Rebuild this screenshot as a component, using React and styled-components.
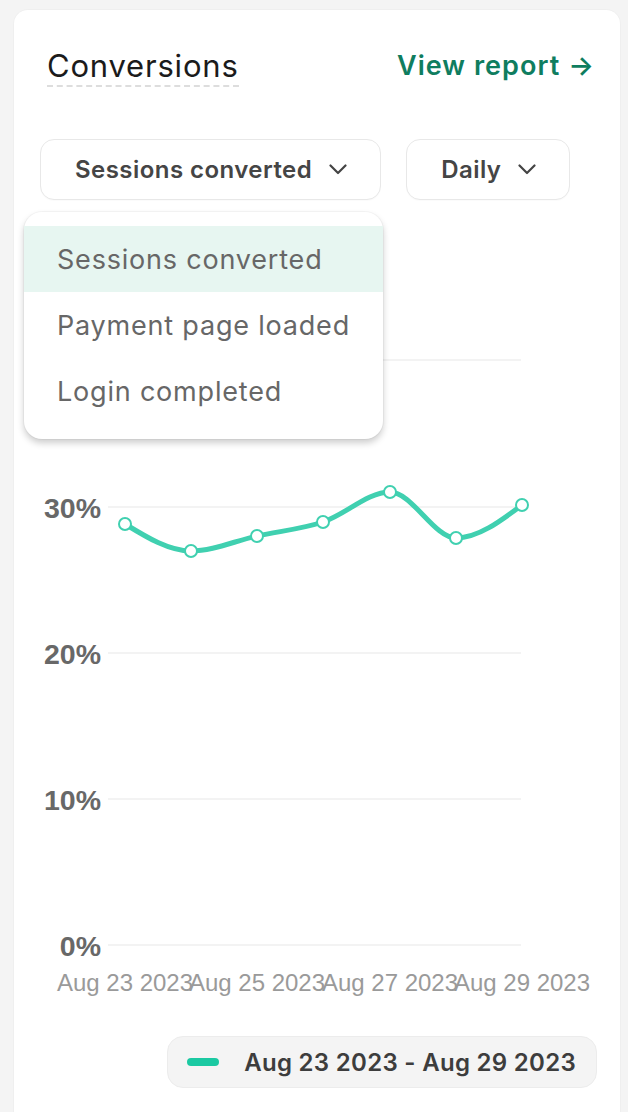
import React from "react";
import styled, { createGlobalStyle } from "styled-components";

const Global = createGlobalStyle`
  html, body { margin: 0; padding: 0; background: #f4f4f4; }
  body { font-family: Inter, "Noto Sans", sans-serif; -webkit-font-smoothing: antialiased; }
`;

const Page = styled.div`
  padding: 10px 8px 0 14px;
  height: 1112px;
  box-sizing: border-box;
  overflow: hidden;
`;

const Card = styled.div`
  background: #ffffff;
  border-radius: 14px;
  padding: 37px 23px 40px 26px;
  min-height: 1140px;
  box-sizing: border-box;
  box-shadow: 0 0 0 1px rgba(0, 0, 0, 0.02);
`;

const Header = styled.div`
  display: flex;
  align-items: flex-start;
  justify-content: space-between;
  padding-left: 7px;
`;

const Title = styled.h2`
  margin: 0;
  font-family: Inter, sans-serif;
  font-weight: 400;
  font-size: 31px;
  line-height: 37px;
  letter-spacing: 0.8px;
  color: #1b1b1b;
  padding-bottom: 1px;
  border-bottom: 2px dashed #dddddd;
`;

const ReportLink = styled.a`
  font-family: Inter, sans-serif;
  font-weight: 600;
  font-size: 27px;
  line-height: 37px;
  color: #0f7d5f;
  text-decoration: none;
  letter-spacing: 1.05px;
  margin-right: 2px;
`;

const Controls = styled.div`
  position: relative;
  display: flex;
  gap: 25px;
  margin-top: 52px;
`;

const SelectButton = styled.button`
  display: inline-flex;
  align-items: center;
  gap: 17px;
  height: 61px;
  padding: 0 33px 0 34px;
  background: #ffffff;
  border: 1px solid #e8e8e8;
  border-radius: 14px;
  font-family: Inter, sans-serif;
  font-weight: 600;
  font-size: 24px;
  letter-spacing: 0.45px;
  color: #454545;
  cursor: pointer;
  box-shadow: 0 1px 1px rgba(0, 0, 0, 0.02);
`;

const Menu = styled.ul`
  position: absolute;
  top: 73px;
  left: -16px;
  width: 359px;
  margin: 0;
  padding: 14px 0 15px;
  list-style: none;
  background: #ffffff;
  border-radius: 18px;
  box-shadow: 0 4px 7px rgba(0, 0, 0, 0.2), 0 0 0 1px rgba(0, 0, 0, 0.03);
  z-index: 5;
`;

const MenuItem = styled.li`
  display: flex;
  align-items: center;
  height: 66px;
  padding-left: 33px;
  font-family: Inter, sans-serif;
  font-size: 27px;
  letter-spacing: 0.8px;
  color: #676767;
  background: ${(p) => (p.$active ? "#e7f6f1" : "transparent")};
`;

const ChartSvg = styled.svg`
  display: block;
  overflow: visible;
`;

const LegendRow = styled.div`
  display: flex;
  justify-content: flex-end;
  margin-top: 36px;
`;

const LegendPill = styled.div`
  display: inline-flex;
  align-items: center;
  gap: 25px;
  height: 52px;
  padding: 0 20px 0 19px;
  box-sizing: border-box;
  background: #f4f4f4;
  border: 1px solid #ececec;
  border-radius: 16px;
  font-family: Inter, sans-serif;
  font-weight: 600;
  font-size: 24px;
  letter-spacing: 0.3px;
  color: #3d3d3d;
`;

const Swatch = styled.span`
  display: block;
  width: 32px;
  height: 8px;
  border-radius: 4px;
  background: ${(p) => p.$color};
`;

const Chevron = () => (
  <svg width="18" height="11" viewBox="0 0 18 11" fill="none">
    <polyline points="1.5,1.5 9,9 16.5,1.5" stroke="#444" strokeWidth="2.2" strokeLinecap="round" strokeLinejoin="round" />
  </svg>
);

function monotonePath(pts) {
  const n = pts.length;
  const s = [];
  const h = [];
  for (let i = 0; i < n - 1; i++) {
    h.push(pts[i + 1][0] - pts[i][0]);
    s.push((pts[i + 1][1] - pts[i][1]) / h[i]);
  }
  const sign = (v) => (v < 0 ? -1 : 1);
  const t = new Array(n);
  for (let i = 1; i < n - 1; i++) {
    const s0 = s[i - 1], s1 = s[i], h0 = h[i - 1], h1 = h[i];
    const p = (s0 * h1 + s1 * h0) / (h0 + h1);
    t[i] = (sign(s0) + sign(s1)) * Math.min(Math.abs(s0), Math.abs(s1), 0.5 * Math.abs(p)) || 0;
  }
  t[0] = (3 * s[0] - t[1]) / 2;
  t[n - 1] = (3 * s[n - 2] - t[n - 2]) / 2;
  let d = `M${pts[0][0]},${pts[0][1]}`;
  for (let i = 0; i < n - 1; i++) {
    const [x0, y0] = pts[i];
    const [x1, y1] = pts[i + 1];
    const dx = (x1 - x0) / 3;
    d += ` C${x0 + dx},${y0 + dx * t[i]} ${x1 - dx},${y1 - dx * t[i + 1]} ${x1},${y1}`;
  }
  return d;
}

const yTicks = [
  { label: "40%", y: 160 },
  { label: "30%", y: 307 },
  { label: "20%", y: 453 },
  { label: "10%", y: 599 },
  { label: "0%", y: 745 },
];

const points = [
  [85, 324],
  [151, 351],
  [217, 336],
  [283, 322],
  [350, 292],
  [416, 338],
  [482, 305],
];

const xLabels = [
  { x: 85, label: "Aug 23 2023" },
  { x: 217, label: "Aug 25 2023" },
  { x: 350, label: "Aug 27 2023" },
  { x: 482, label: "Aug 29 2023" },
];

const LINE = "#40d0b0";

function Chart() {
  return (
    <ChartSvg width="557" height="800" viewBox="0 0 557 800">
      {yTicks.map((t) => (
        <g key={t.label}>
          <line x1="68" x2="481" y1={t.y} y2={t.y} stroke="#f3f3f3" strokeWidth="2" />
          <text
            x="61"
            y={t.y + 1}
            textAnchor="end"
            dominantBaseline="central"
            fontFamily="'Liberation Sans', Arial, sans-serif"
            fontWeight="700"
            fontSize="28.5"
            fill="#686868"
          >
            {t.label}
          </text>
        </g>
      ))}
      <path d={monotonePath(points)} fill="none" stroke={LINE} strokeWidth="5" strokeLinecap="round" />
      {points.map(([x, y], i) => (
        <circle key={i} cx={x} cy={y} r="6" fill="#ffffff" stroke={LINE} strokeWidth="2" />
      ))}
      {xLabels.map((l) => (
        <text
          key={l.label}
          x={l.x}
          y="782"
          textAnchor="middle"
          dominantBaseline="central"
          fontFamily="'Liberation Sans', Arial, sans-serif"
          fontSize="24"
          fill="#9a9a9a"
        >
          {l.label}
        </text>
      ))}
    </ChartSvg>
  );
}

export default function App() {
  return (
    <Page>
      <Global />
      <Card>
        <Header>
          <Title>Conversions</Title>
          <ReportLink href="#">View report →</ReportLink>
        </Header>
        <Controls>
          <SelectButton>
            Sessions converted
            <Chevron />
          </SelectButton>
          <SelectButton>
            Daily
            <Chevron />
          </SelectButton>
          <Menu>
            <MenuItem $active>Sessions converted</MenuItem>
            <MenuItem>Payment page loaded</MenuItem>
            <MenuItem>Login completed</MenuItem>
          </Menu>
        </Controls>
        <Chart />
        <LegendRow>
          <LegendPill>
            <Swatch $color="#1bc9a2" />
            Aug 23 2023 - Aug 29 2023
          </LegendPill>
        </LegendRow>
      </Card>
    </Page>
  );
}
